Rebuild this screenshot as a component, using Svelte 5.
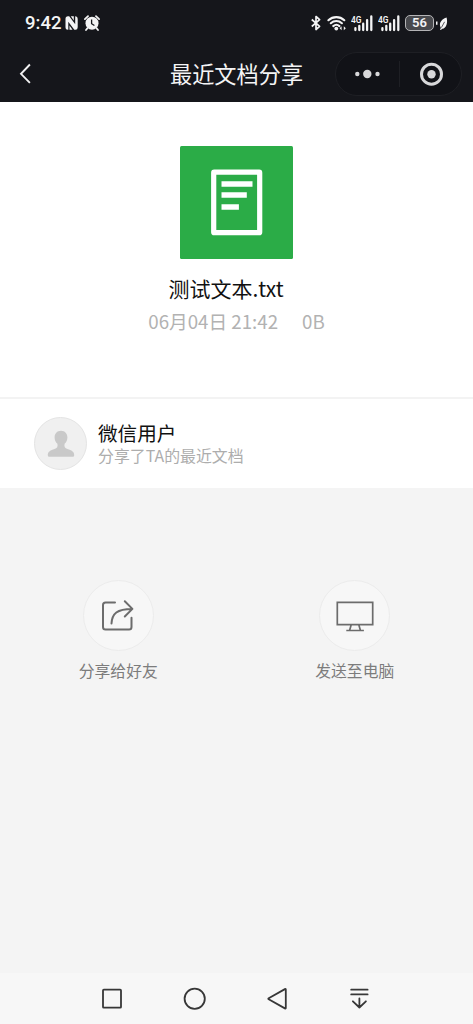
<script>
  const file = { name: '测试文本.txt', date: '06月04日 21:42', size: '0B' };
  const user = { name: '微信用户', note: '分享了TA的最近文档' };
  const signals = [0, 1];
</script>

<div class="page">
  <header>
    <div class="status">
      <span class="time">9:42</span>
      <svg class="nfc" width="13" height="14" viewBox="0 0 13 14">
        <path d="M3 .3h1.200l6 8V.3h.3q2.200 0 2.200 2.500v8.400q0 2.500-2.200 2.500H9.300l-6-8v8H3Q.5 13.700.5 11.200V2.800Q.5.300 3 .3z" fill="#f4f4f5" />
        <path d="M5.800.3h3v4.200zM7.500 13.700h-3V9.500z" fill="#f4f4f5" />
      </svg>
      <svg class="alarm" width="16" height="16" viewBox="0 0 16 16">
        <circle cx="8" cy="8.200" r="6.500" fill="#f4f4f5" />
        <path d="M.9 4.100 4 1.200M15.100 4.100 12 1.200M3.500 13.200 2 15M12.500 13.200 14 15" stroke="#f4f4f5" stroke-width="1.800" stroke-linecap="round" />
        <path d="M7.600 4.500v4.200l2.800 1.800" fill="none" stroke="#15161b" stroke-width="1.300" />
      </svg>
      <div class="indicators">
        <svg class="bluetooth" width="10" height="16" viewBox="0 0 10 16">
          <path d="m.8 4.500 7.800 6.800L5 14.500v-13l3.600 3.200L.8 11.500" fill="none" stroke="#f4f4f5" stroke-width="1.700" stroke-linejoin="round" />
        </svg>
        <svg class="wifi" width="20" height="16" viewBox="0 0 20 16">
          <path d="M1.400 5.200a11.800 11.800 0 0 1 15.900 0M3.800 8.200a8.200 8.200 0 0 1 11.100 0M6.300 11.100a4.600 4.600 0 0 1 6.100 0" fill="none" stroke="#f4f4f5" stroke-width="2.100" stroke-linecap="round" />
          <circle cx="9.300" cy="13.600" r="1.900" fill="#f4f4f5" />
          <path d="m12.600 13.300 2-2v4zM18.800 13.300l-2-2v4z" fill="#f4f4f5" />
        </svg>
        {#each signals as s}
          <svg class="signal" width="23" height="17" viewBox="0 0 23 17">
            <text x="0" y="7.600" textLength="10.500" lengthAdjust="spacingAndGlyphs">4G</text>
            <path d="M4.400 13.200v1.800M8.300 10.900v4.100M12.200 8.700v6.300M16.100 5.100v9.900M20.300 1.400v13.600" stroke="#f4f4f5" stroke-width="2.300" stroke-linecap="round" />
          </svg>
        {/each}
        <div class="battery">56</div>
        <svg class="leaf" width="12" height="15" viewBox="0 0 12 15">
          <path d="M0 5.500v3.300" stroke="#f4f4f5" stroke-width="3" />
          <path d="M10.600 1.500C6 3 3.500 6.200 4 9.600c.1 1 .4 1.700.9 2.300l-1 1.700 1.200.5.8-1.400c3.600.2 6.300-4.800 4.700-11.200z" fill="#f4f4f5" />
          <path d="M8.600 5.800 5.400 11.600" stroke="#15161b" stroke-width=".7" />
        </svg>
      </div>
    </div>
    <div class="titlebar">
      <svg class="back" width="14" height="22" viewBox="0 0 14 22">
        <path d="M11.900 1.500 3 10.800l8.900 9.100" fill="none" stroke="#f1f1f2" stroke-width="1.900" />
      </svg>
      <h1>最近文档分享</h1>
      <div class="capsule">
        <svg width="63" height="42" viewBox="0 0 63 42">
          <g fill="#d8d8da">
            <circle cx="21.300" cy="21" r="2.200" />
            <circle cx="31.300" cy="21" r="4.200" />
            <circle cx="41.500" cy="21" r="2.200" />
          </g>
        </svg>
        <i></i>
        <svg width="61" height="42" viewBox="0 0 61 42">
          <circle cx="31.500" cy="21.200" r="10" fill="none" stroke="#d8d8da" stroke-width="3" />
          <circle cx="31.500" cy="21.200" r="4.200" fill="#d8d8da" />
        </svg>
      </div>
    </div>
  </header>

  <section class="file">
    <svg width="113" height="113" viewBox="0 0 113 113">
      <rect width="113" height="113" rx="1.500" fill="#2bac47" />
      <rect x="33.700" y="26.200" width="46" height="60.500" rx=".5" fill="none" stroke="#fff" stroke-width="5.200" stroke-linejoin="round" />
      <path d="M41.500 38h31M41.500 49h25.300M41.500 61h17.400" stroke="#fff" stroke-width="5.400" />
    </svg>
    <h2>{file.name}</h2>
    <p><span>{file.date}</span><span>{file.size}</span></p>
  </section>

  <section class="user">
    <div class="avatar">
      <svg width="28" height="28" viewBox="0 0 28 28">
        <path d="M14 .7c-3.900 0-6.400 2.900-6.400 6.700 0 3 1.300 5 2.800 6.400.6 3-.2 4.300-2.900 5.200C3.500 20.300.8 21.400.8 25.200q0 1.600 1.400 1.600h23.600q1.400 0 1.400-1.600c0-3.800-2.700-4.900-6.700-6.200-2.700-.9-3.500-2.200-2.900-5.200 1.500-1.400 2.800-3.400 2.800-6.400C20.400 3.600 17.900.7 14 .7z" fill="#c9c9c9" />
      </svg>
    </div>
    <div class="info">
      <strong>{user.name}</strong>
      <span>{user.note}</span>
    </div>
  </section>

  <section class="actions">
    <div class="action">
      <div class="circle">
        <svg width="34" height="34" viewBox="0 0 34 34" fill="none" stroke="#6c6c6c" stroke-width="2" stroke-linecap="round" stroke-linejoin="round">
          <path d="M14 3.500H4.500Q2 3.500 2 6v22q0 2.500 2.500 2.500H28q2.500 0 2.500-2.500V18.700" />
          <path d="M10.500 24.500C11 14.500 16 9.900 31 9.900M23.800 2.300l7.600 7.600-7.600 7.600" />
        </svg>
      </div>
      <span>分享给好友</span>
    </div>
    <div class="action">
      <div class="circle">
        <svg width="38" height="34" viewBox="0 0 38 34" fill="none" stroke="#6c6c6c" stroke-width="1.700">
          <path d="M1.300 3.300h35.400v22.300H1.300zM15.200 25.800l-1.500 5.200M22.800 25.800l1.500 5.200M10.300 31.500h17.600" />
        </svg>
      </div>
      <span>发送至电脑</span>
    </div>
  </section>

  <nav>
    <svg viewBox="0 0 26 26"><rect x="4" y="3.700" width="18" height="18" rx=".8" /></svg>
    <svg viewBox="0 0 26 26"><circle cx="12.700" cy="12.700" r="10.100" /></svg>
    <svg viewBox="0 0 26 26"><path d="M21.800 3.700v18.200q0 1-.9.500L4.700 13.200q-.8-.5 0-1L20.900 3.100q.9-.5.900.6z" /></svg>
    <svg viewBox="0 0 26 26"><path d="M4.200 3.700h16.400M4.200 8.400h16.400M12.400 12.500v9M5.900 15.300l6.500 6.200 6.500-6.200" /></svg>
  </nav>
</div>

<style>
  :global(body) {
    background: #f4f4f4;
  }
  .page {
    display: flex;
    flex-direction: column;
    width: 473px;
    height: 1024px;
    overflow: hidden;
    background: #f4f4f4;
    font-family: 'Noto Sans CJK SC', sans-serif;
  }
  svg {
    display: block;
    flex: none;
  }
  h1,
  h2,
  p {
    margin: 0;
    font-weight: 400;
  }
  header {
    height: 102px;
    flex: none;
    background: #15161b;
    color: #f4f4f5;
  }
  .status {
    display: flex;
    align-items: center;
    height: 46px;
    padding: 0 25px;
  }
  .time {
    width: 36px;
    font: 500 18.500px/24px Roboto, sans-serif;
    white-space: nowrap;
  }
  .nfc {
    margin-left: 4px;
  }
  .alarm {
    margin-left: 6px;
  }
  .indicators {
    display: flex;
    align-items: center;
    margin-left: auto;
  }
  .wifi {
    margin: 0 4px 0 6px;
  }
  .signal {
    margin-right: 4px;
  }
  .signal text {
    fill: #f4f4f5;
    font: 600 9px Roboto, sans-serif;
  }
  .battery {
    box-sizing: border-box;
    width: 29px;
    height: 16px;
    margin-right: 2px;
    border: 1.500px solid #b4b4b6;
    border-radius: 5px;
    background: #48494d;
    font: 600 13px/14px Roboto, sans-serif;
    text-align: center;
  }
  .titlebar {
    display: flex;
    align-items: center;
    height: 56px;
    padding: 0 11px 0 18px;
  }
  .titlebar h1 {
    width: 140px;
    margin: 0 0 2px 138px;
    font-size: 22.200px;
    line-height: 32px;
    white-space: nowrap;
  }
  .capsule {
    display: flex;
    align-items: center;
    box-sizing: border-box;
    width: 127px;
    height: 44px;
    margin-left: auto;
    border: 1px solid #1e1f24;
    border-radius: 22px;
    background: #111217;
  }
  .capsule i {
    width: 1px;
    height: 26px;
    background: #1e1f24;
  }
  .file {
    display: flex;
    flex-direction: column;
    align-items: center;
    box-sizing: border-box;
    height: 297px;
    padding-top: 44px;
    border-bottom: 2px solid #f3f3f3;
    background: #fff;
  }
  .file h2 {
    margin-top: 14px;
    padding-right: 21px;
    color: #111;
    font-size: 21px;
    line-height: 31px;
  }
  .file p {
    display: flex;
    gap: 24px;
    margin-top: 3px;
    color: #b2b2b2;
    font-size: 18.700px;
    line-height: 27px;
  }
  .user {
    display: flex;
    align-items: center;
    box-sizing: border-box;
    height: 89px;
    padding-left: 34px;
    background: #fff;
  }
  .avatar {
    display: grid;
    place-items: center;
    box-sizing: border-box;
    width: 53px;
    height: 53px;
    border: 1.500px solid #e4e4e4;
    border-radius: 50%;
    background: #f0f0f0;
  }
  .info {
    display: flex;
    flex-direction: column;
    margin-left: 11px;
  }
  .info strong {
    color: #111;
    font-size: 19.600px;
    font-weight: 400;
    line-height: 24px;
  }
  .info span {
    color: #adadad;
    font-size: 15.900px;
    line-height: 22px;
  }
  .actions {
    display: flex;
    flex: 1;
    padding-top: 92px;
  }
  .action {
    display: flex;
    flex: 1;
    flex-direction: column;
    align-items: center;
    color: #7c7c7c;
    font-size: 15.800px;
    line-height: 24px;
  }
  .circle {
    display: grid;
    place-items: center;
    box-sizing: border-box;
    width: 71px;
    height: 71px;
    margin-bottom: 8px;
    border: 1.500px solid #ececec;
    border-radius: 50%;
    background: #f7f7f7;
  }
  nav {
    display: flex;
    justify-content: space-between;
    align-items: center;
    box-sizing: border-box;
    height: 51px;
    padding: 0 100px 0 99px;
    background: #f7f7f7;
  }
  nav svg {
    width: 26px;
    height: 26px;
    fill: none;
    stroke: #373737;
    stroke-width: 1.800;
    stroke-linecap: round;
    stroke-linejoin: round;
  }
</style>
